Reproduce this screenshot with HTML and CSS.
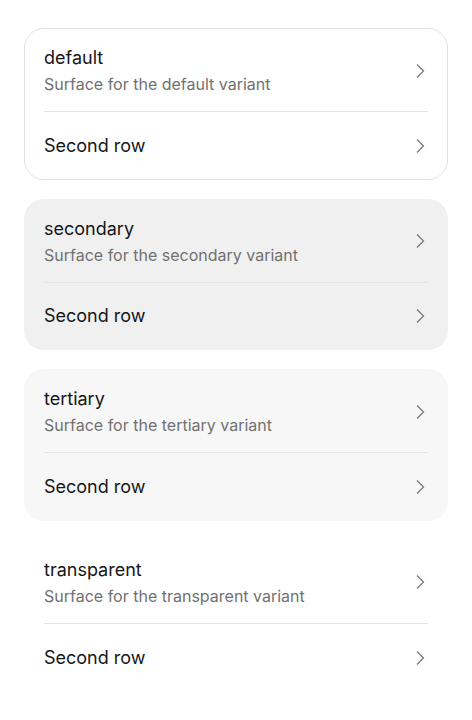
FILE: index.html
```html
<!DOCTYPE html>
<html lang="en">
<head>
  <meta charset="UTF-8">
  <meta name="viewport" content="width=device-width, initial-scale=1.0">
  <title>Surfaces</title>
  <link rel="stylesheet" href="styles.css">
</head>
<body>
  <main class="page">
    <section class="surface surface-default">
      <div class="row">
        <div class="row-text">
          <div class="row-title">default</div>
          <div class="row-sub">Surface for the default variant</div>
        </div>
        <svg class="chev" viewBox="0 0 16 16"><path d="M5 1.5 L11.5 8 L5 14.5"/></svg>
      </div>
      <div class="row">
        <div class="row-text"><div class="row-title">Second row</div></div>
        <svg class="chev" viewBox="0 0 16 16"><path d="M5 1.5 L11.5 8 L5 14.5"/></svg>
      </div>
    </section>

    <section class="surface surface-secondary">
      <div class="row">
        <div class="row-text">
          <div class="row-title">secondary</div>
          <div class="row-sub">Surface for the secondary variant</div>
        </div>
        <svg class="chev" viewBox="0 0 16 16"><path d="M5 1.5 L11.5 8 L5 14.5"/></svg>
      </div>
      <div class="row">
        <div class="row-text"><div class="row-title">Second row</div></div>
        <svg class="chev" viewBox="0 0 16 16"><path d="M5 1.5 L11.5 8 L5 14.5"/></svg>
      </div>
    </section>

    <section class="surface surface-tertiary">
      <div class="row">
        <div class="row-text">
          <div class="row-title">tertiary</div>
          <div class="row-sub">Surface for the tertiary variant</div>
        </div>
        <svg class="chev" viewBox="0 0 16 16"><path d="M5 1.5 L11.5 8 L5 14.5"/></svg>
      </div>
      <div class="row">
        <div class="row-text"><div class="row-title">Second row</div></div>
        <svg class="chev" viewBox="0 0 16 16"><path d="M5 1.5 L11.5 8 L5 14.5"/></svg>
      </div>
    </section>

    <section class="surface surface-transparent">
      <div class="row">
        <div class="row-text">
          <div class="row-title">transparent</div>
          <div class="row-sub">Surface for the transparent variant</div>
        </div>
        <svg class="chev" viewBox="0 0 16 16"><path d="M5 1.5 L11.5 8 L5 14.5"/></svg>
      </div>
      <div class="row">
        <div class="row-text"><div class="row-title">Second row</div></div>
        <svg class="chev" viewBox="0 0 16 16"><path d="M5 1.5 L11.5 8 L5 14.5"/></svg>
      </div>
    </section>
  </main>
</body>
</html>
```

FILE: styles.css
```css
body {
  margin: 0;
  background: #fff;
  font-family: Inter, "Noto Sans", sans-serif;
  color: #161618;
}
.page {
  display: flex;
  flex-direction: column;
  gap: 19px;
  padding: 28px 24px;
}
.surface {
  border-radius: 20px;
  border: 1px solid transparent;
  padding: 0 19px;
}
.surface-default {
  background: #fff;
  border-color: #e2e2e2;
}
.surface-secondary {
  background: #f0f0f0;
}
.surface-tertiary {
  background: #f7f7f7;
}
.surface-transparent {
  background: transparent;
}
.row {
  display: flex;
  align-items: center;
  min-height: 67.67px;
  padding: 17px 0 16px;
  box-sizing: border-box;
}
.row + .row {
  border-top: 1px solid #e4e4e4;
}
.row-text {
  flex: 1;
  display: flex;
  flex-direction: column;
  gap: 3px;
}
.row-title {
  font-size: 18px;
  line-height: 24px;
}
.row-sub {
  font-size: 16px;
  line-height: 22px;
  color: #717171;
}
.chev {
  width: 16px;
  height: 16px;
  fill: none;
  stroke: #7a7a7a;
  stroke-width: 1.3;
}
```
